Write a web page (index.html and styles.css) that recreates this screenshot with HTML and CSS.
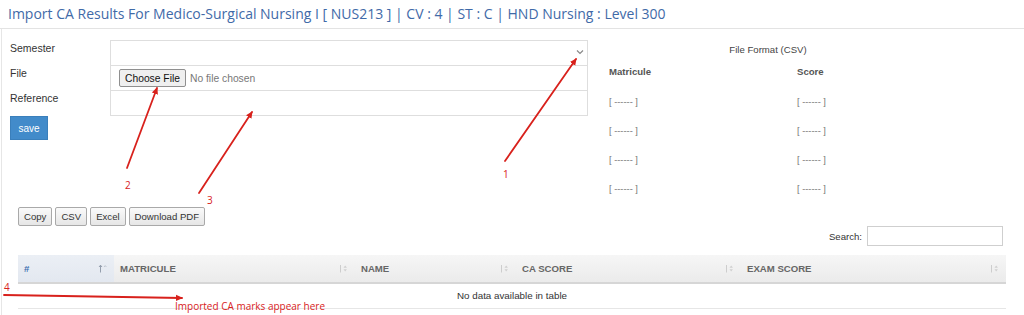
FILE: index.html
```html
<!DOCTYPE html>
<html lang="en">
<head>
<meta charset="utf-8">
<title>Import CA Results</title>
<link rel="stylesheet" href="styles.css">
</head>
<body>
<h1 class="page-title">Import CA Results For Medico-Surgical Nursing I [ NUS213 ] | CV : 4 | ST : C | HND Nursing : Level 300</h1>
<div class="content">
  <section class="upload">
    <div class="upload-form">
      <div class="field-label">Semester</div>
      <div class="field select-field">
        <svg class="chev" width="8" height="6" viewBox="0 0 8 6"><path d="M1 1.5 L4 4.5 L7 1.5" fill="none" stroke="#888" stroke-width="1.2"/></svg>
      </div>
      <div class="field-label">File</div>
      <div class="field file-field">
        <span class="file-btn">Choose File</span>
        <span class="file-none">No file chosen</span>
      </div>
      <div class="field-label">Reference</div>
      <div class="field last-field"></div>
      <div class="save-cell"><span class="save-btn">save</span></div>
    </div>
    <div class="csv-format">
      <div class="csv-caption">File Format (CSV)</div>
      <div class="csv-grid">
        <div class="csv-head">Matricule</div>
        <div class="csv-head">Score</div>
        <div class="csv-cell">[ ------ ]</div>
        <div class="csv-cell">[ ------ ]</div>
        <div class="csv-cell">[ ------ ]</div>
        <div class="csv-cell">[ ------ ]</div>
        <div class="csv-cell">[ ------ ]</div>
        <div class="csv-cell">[ ------ ]</div>
        <div class="csv-cell">[ ------ ]</div>
        <div class="csv-cell">[ ------ ]</div>
      </div>
    </div>
  </section>

  <section class="table-area">
    <div class="tools">
      <span class="tool-btn">Copy</span>
      <span class="tool-btn">CSV</span>
      <span class="tool-btn">Excel</span>
      <span class="tool-btn">Download PDF</span>
    </div>
    <div class="search-row">
      <span class="search-label">Search:</span>
      <span class="search-input"></span>
    </div>
    <table class="data-table">
      <thead>
        <tr>
          <th class="col-num sorted"><div class="th-inner"><span>#</span>
            <svg class="sort" width="9" height="9" viewBox="0 0 9 9"><path d="M2.5 8.5 V1.5 M1 3 L2.5 1.2 L4 3" fill="none" stroke="#8a95a5" stroke-width="0.9"/><path d="M6 3 L7.2 1.6 L8.4 3" fill="none" stroke="#b5bcc6" stroke-width="0.8"/></svg></div></th>
          <th class="col-mat"><div class="th-inner"><span>MATRICULE</span>
            <svg class="sort" width="9" height="9" viewBox="0 0 9 9"><path d="M1.5 1 V8.5" stroke="#c8c8c8" stroke-width="0.9"/><path d="M4.5 3.8 L6.2 1.6 L7.9 3.8 Z M4.5 5.2 L6.2 7.4 L7.9 5.2 Z" fill="#cfcfcf"/></svg></div></th>
          <th class="col-name"><div class="th-inner"><span>NAME</span>
            <svg class="sort" width="9" height="9" viewBox="0 0 9 9"><path d="M1.5 1 V8.5" stroke="#c8c8c8" stroke-width="0.9"/><path d="M4.5 3.8 L6.2 1.6 L7.9 3.8 Z M4.5 5.2 L6.2 7.4 L7.9 5.2 Z" fill="#cfcfcf"/></svg></div></th>
          <th class="col-ca"><div class="th-inner"><span>CA SCORE</span>
            <svg class="sort" width="9" height="9" viewBox="0 0 9 9"><path d="M1.5 1 V8.5" stroke="#c8c8c8" stroke-width="0.9"/><path d="M4.5 3.8 L6.2 1.6 L7.9 3.8 Z M4.5 5.2 L6.2 7.4 L7.9 5.2 Z" fill="#cfcfcf"/></svg></div></th>
          <th class="col-exam"><div class="th-inner"><span>EXAM SCORE</span>
            <svg class="sort" width="9" height="9" viewBox="0 0 9 9"><path d="M1.5 1 V8.5" stroke="#c8c8c8" stroke-width="0.9"/><path d="M4.5 3.8 L6.2 1.6 L7.9 3.8 Z M4.5 5.2 L6.2 7.4 L7.9 5.2 Z" fill="#cfcfcf"/></svg></div></th>
        </tr>
      </thead>
      <tbody>
        <tr><td class="empty" colspan="5">No data available in table</td></tr>
      </tbody>
    </table>
  </section>
</div>

<svg class="annotations" width="1024" height="315" viewBox="0 0 1024 315">
  <defs>
    <marker id="head" markerWidth="8" markerHeight="8" refX="6" refY="4" orient="auto" markerUnits="userSpaceOnUse">
      <path d="M0 0.8 L7 4 L0 7.2 Z" fill="#d8211c"/>
    </marker>
  </defs>
  <g stroke="#d8211c" stroke-width="1.8" fill="none" stroke-linecap="round">
    <line x1="505" y1="161" x2="576" y2="59" marker-end="url(#head)"/>
    <line x1="127" y1="168" x2="157" y2="88" marker-end="url(#head)"/>
    <line x1="199" y1="193" x2="252" y2="112" marker-end="url(#head)"/>
    <line x1="4" y1="295" x2="182" y2="298" marker-end="url(#head)"/>
  </g>
  <g class="anno-text" fill="#d8211c">
    <text x="503" y="178">1</text>
    <text x="125" y="189">2</text>
    <text x="207" y="204">3</text>
    <text x="4" y="291">4</text>
    <text x="175" y="310">Imported CA marks appear here</text>
  </g>
</svg>
</body>
</html>
```

FILE: styles.css
```css
* { box-sizing: border-box; }

body {
  margin: 0;
  width: 1024px;
  height: 315px;
  overflow: hidden;
  position: relative;
  background: #fff;
  color: #333;
  font-family: "Liberation Sans", Arial, sans-serif;
}

.page-title {
  margin: 0;
  height: 29px;
  padding-left: 8px;
  font-family: "Open Sans", sans-serif;
  font-size: 14px;
  line-height: 28px;
  font-weight: normal;
  color: #3f6aa8;
  border-bottom: 1px solid #e3e3e3;
  white-space: nowrap;
}

.content {
  margin-left: 1px;
  border-left: 1px solid #e6e6e6;
  height: 286px;
}

/* upload form */
.upload {
  display: flex;
  padding-top: 11px;
}

.upload-form {
  display: grid;
  grid-template-columns: 100px 478px;
  grid-template-rows: 25px 25px 26px 24px;
  margin-left: 8px;
  align-self: flex-start;
}

.field-label {
  padding-top: 1px;
  font-size: 10.5px;
  line-height: 14px;
  color: #333;
}

.field {
  border: 1px solid #dedede;
  border-bottom: none;
  background: #fff;
  display: flex;
  align-items: center;
}

.last-field { border-bottom: 1px solid #dedede; }

.select-field {
  justify-content: flex-end;
  padding-right: 3px;
}

.chev { margin-top: -2px; }

.file-field { padding-left: 8px; }

.file-btn {
  display: inline-flex;
  align-items: center;
  height: 18px;
  padding: 0 5px;
  font-size: 10.3px;
  color: #111;
  background: #efefef;
  border: 1px solid #8f8f8f;
  border-radius: 2px;
}

.file-none {
  margin-left: 4px;
  font-size: 10.3px;
  color: #777;
}

.save-cell { grid-column: 1; }

.save-btn {
  display: flex;
  align-items: center;
  justify-content: center;
  width: 38px;
  height: 24px;
  background: #428bca;
  border: 1px solid #3a7fbb;
  color: #fff;
  font-size: 10px;
}

/* csv format panel */
.csv-format {
  margin-left: 2px;
  padding-left: 19px;
}

.csv-caption {
  width: 318px;
  height: 25px;
  padding-top: 3px;
  text-align: center;
  font-size: 9.6px;
  line-height: 14px;
  color: #444;
}

.csv-grid {
  display: grid;
  grid-template-columns: 188px 188px;
  grid-template-rows: 22px repeat(4, 29px);
}

.csv-head {
  font-size: 9.6px;
  font-weight: bold;
  line-height: 14px;
  color: #555;
}

.csv-cell {
  display: flex;
  align-items: center;
  font-size: 9.3px;
  color: #777;
}

/* table area */
.table-area {
  margin-left: 16px;
  width: 988px;
}

.tools {
  display: flex;
  gap: 3px;
  margin-top: 4px;
}

.tool-btn {
  display: inline-flex;
  align-items: center;
  height: 19px;
  padding: 0 5px;
  font-size: 9.6px;
  color: #333;
  background: linear-gradient(#fafafa, #e6e6e6);
  border: 1px solid #a9a9a9;
  border-radius: 2px;
}

.search-row {
  display: flex;
  justify-content: flex-end;
  align-items: center;
  height: 20px;
  padding-right: 3px;
}

.search-label {
  font-size: 9.6px;
  color: #333;
  margin-right: 5px;
}

.search-input {
  width: 136px;
  height: 20px;
  border: 1px solid #cfcfcf;
  background: #fff;
}

.data-table {
  margin-top: 9px;
  width: 988px;
  border-collapse: collapse;
  table-layout: fixed;
}

.data-table th {
  height: 28px;
  padding: 0 7px 0 6px;
  text-align: left;
  font-size: 9.6px;
  font-weight: bold;
  color: #666;
  background: linear-gradient(#f6f6f6, #ebebeb);
  border-bottom: 2px solid #d6d6d6;
}

.th-inner {
  display: flex;
  align-items: center;
  justify-content: space-between;
}

.data-table th.sorted {
  background: linear-gradient(#ebeff5, #e3e8f0);
  color: #3d6fb0;
}

.col-num { width: 96px; }
.col-mat { width: 241px; }
.col-name { width: 161px; }
.col-ca { width: 225px; }
.col-exam { width: 265px; }

.data-table td.empty {
  height: 25px;
  text-align: center;
  font-size: 9.8px;
  color: #333;
  border-bottom: 1px solid #e6e6e6;
}

/* annotation overlay */
.annotations {
  position: absolute;
  left: 0;
  top: 0;
  pointer-events: none;
}

.anno-text {
  font-family: "Open Sans", sans-serif;
  font-size: 10px;
}
```
